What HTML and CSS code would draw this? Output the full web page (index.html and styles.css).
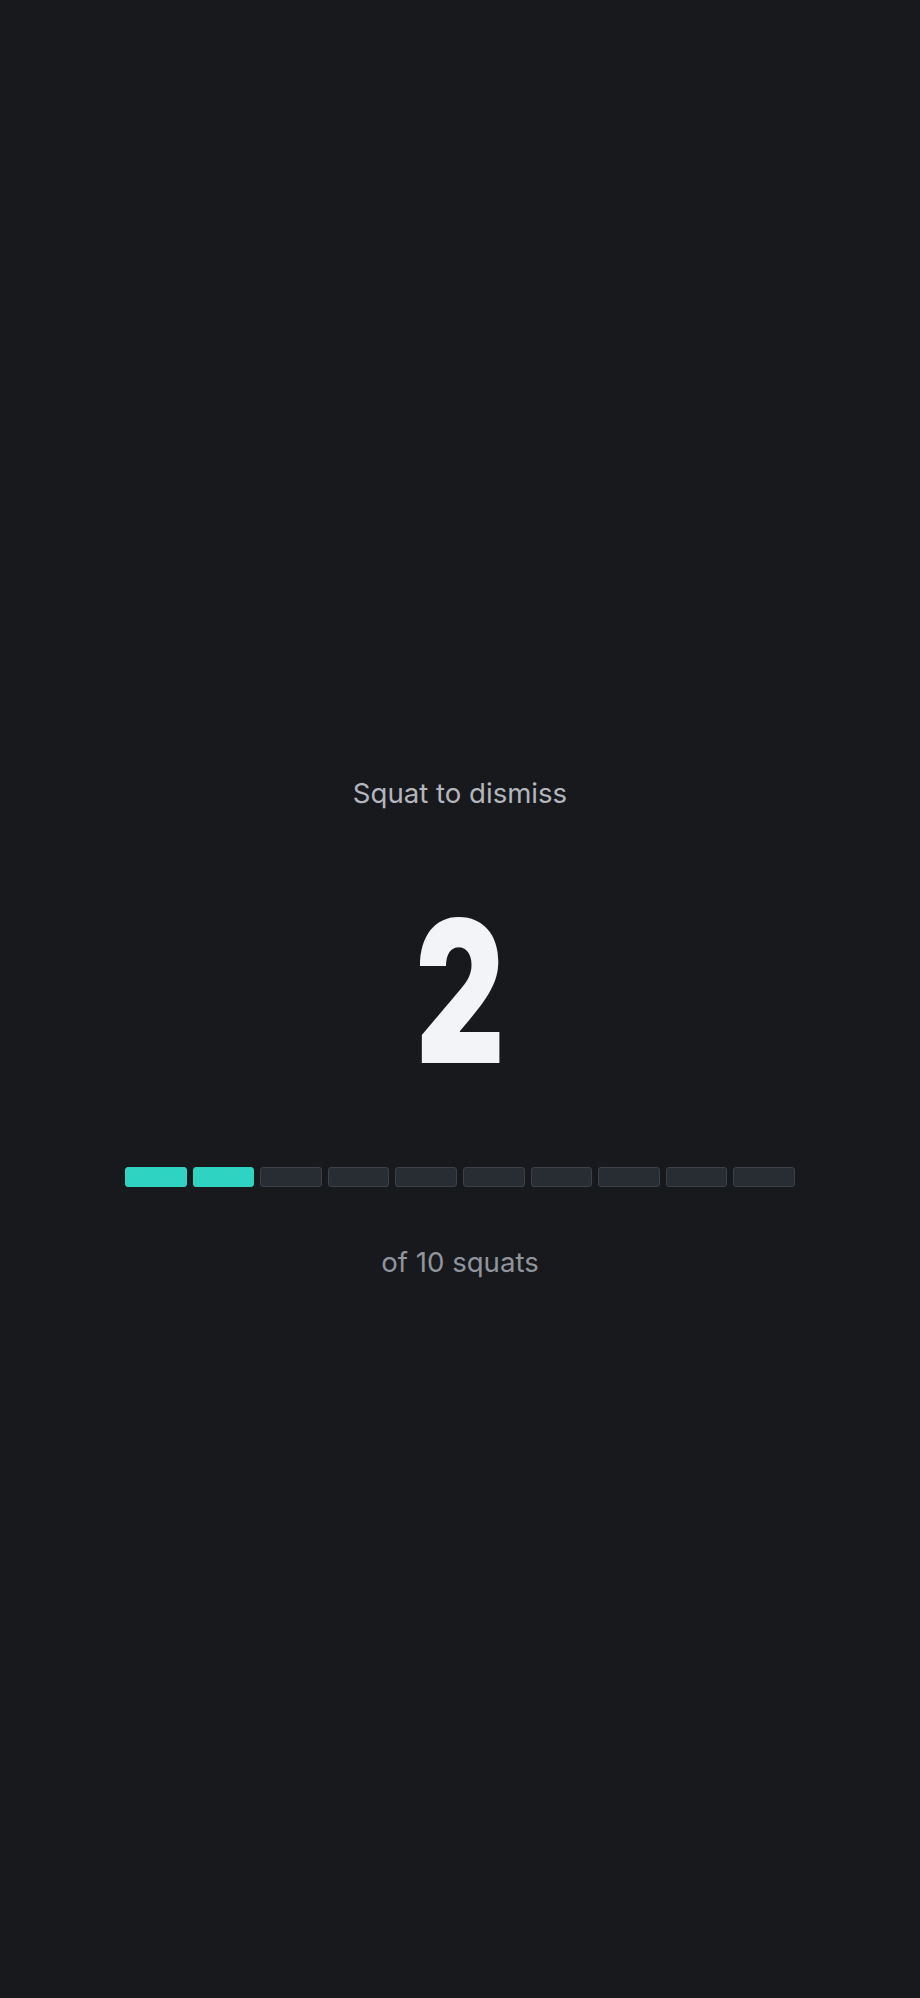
FILE: index.html
```html
<!DOCTYPE html>
<html>
<head>
<meta charset="utf-8">
<link rel="stylesheet" href="styles.css">
</head>
<body>
<main class="screen">
  <p class="title">Squat to dismiss</p>
  <div class="count">2</div>
  <div class="bars">
    <span class="bar on"></span>
    <span class="bar on"></span>
    <span class="bar"></span>
    <span class="bar"></span>
    <span class="bar"></span>
    <span class="bar"></span>
    <span class="bar"></span>
    <span class="bar"></span>
    <span class="bar"></span>
    <span class="bar"></span>
  </div>
  <p class="sub">of 10 squats</p>
</main>
</body>
</html>
```
FILE: styles.css
```css
html, body {
  margin: 0;
  padding: 0;
  background: #18191d;
}
.screen {
  height: 1998px;
  display: flex;
  flex-direction: column;
  align-items: center;
  padding-top: 776px;
  box-sizing: border-box;
  font-family: Inter, "Noto Sans", sans-serif;
}
.title {
  margin: 0;
  font-size: 27.6px;
  line-height: 34px;
  color: #b3b6bd;
}
.count {
  margin-top: 82px;
  font-size: 198px;
  line-height: 198px;
  font-weight: 900;
  color: #f3f4f7;
  transform: scaleX(0.7);
}
.bars {
  margin-top: 77px;
  display: flex;
  gap: 6px;
  width: 670px;
}
.bar {
  flex: 1;
  height: 20px;
  box-sizing: border-box;
  border-radius: 3px;
  background: #282c33;
  border: 1.5px solid #3c4048;
}
.bar.on {
  background: #2fd3c2;
  border-color: #2fd3c2;
}
.sub {
  margin: 58px 0 0;
  font-size: 27.6px;
  line-height: 34px;
  color: #90949c;
}
```
